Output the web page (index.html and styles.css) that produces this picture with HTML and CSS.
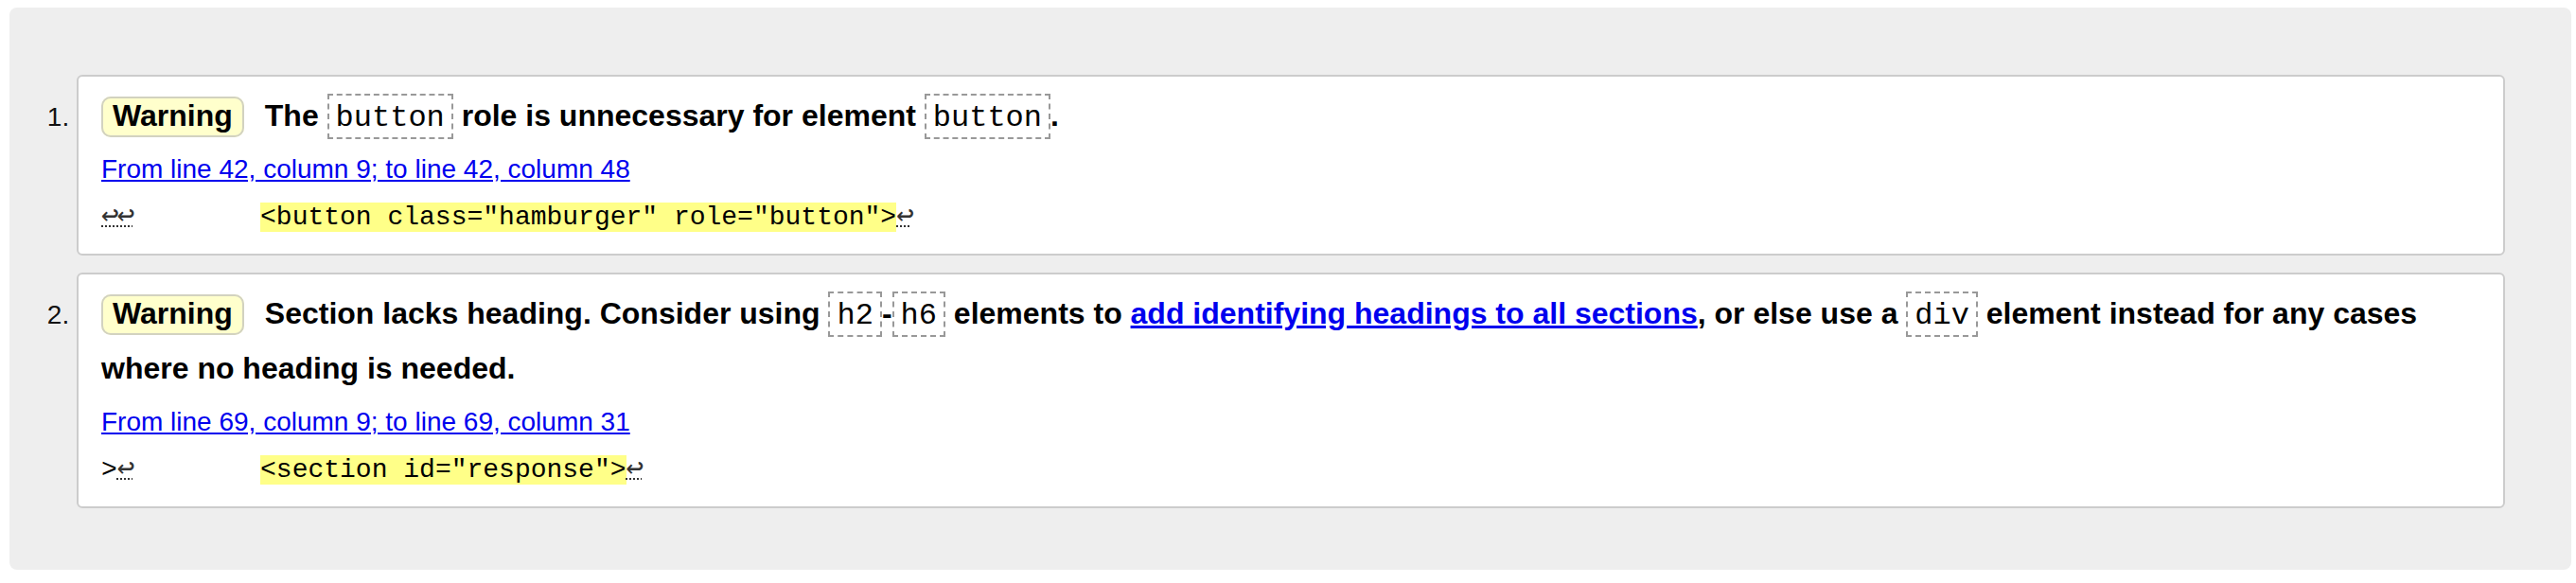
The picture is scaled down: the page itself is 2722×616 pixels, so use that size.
FILE: index.html
```html
<!DOCTYPE html>
<html lang="en">
<head>
<meta charset="utf-8">
<title>Nu Html Checker results</title>
<link rel="stylesheet" href="styles.css">
</head>
<body>
<div class="results">
  <ol class="messages">
    <li class="message">
      <p class="summary"><strong class="badge">Warning</strong><span class="text">The <code>button</code> role is unnecessary for element <code>button</code>.</span></p>
      <p class="location"><a href="#l42c9">From line 42, column 9; to line 42, column 48</a></p>
      <p class="extract"><code><abbr class="lf" title="Line break">↩↩</abbr>        <mark>&lt;button class="hamburger" role="button"&gt;</mark><abbr class="lf" title="Line break">↩</abbr></code></p>
    </li>
    <li class="message">
      <p class="summary"><strong class="badge">Warning</strong><span class="text">Section lacks heading. Consider using <code>h2</code>-<code>h6</code> elements to <a href="#headings">add identifying headings to all sections</a>, or else use a <code>div</code> element instead for any cases where no heading is needed.</span></p>
      <p class="location"><a href="#l69c9">From line 69, column 9; to line 69, column 31</a></p>
      <p class="extract"><code>&gt;<abbr class="lf" title="Line break">↩</abbr>        <mark>&lt;section id="response"&gt;</mark><abbr class="lf" title="Line break">↩</abbr></code></p>
    </li>
  </ol>
</div>
</body>
</html>
```

FILE: styles.css
```css
html, body {
  margin: 0;
  padding: 0;
  background: #fff;
}

body {
  padding: 8px 5px 14px 10px;
  font-family: "Liberation Sans", Arial, Helvetica, sans-serif;
  font-size: 28px;
  color: #000;
}

.results {
  background: #eee;
  border-radius: 8px;
  padding: 71px 70px 65px 71px;
}

.messages {
  margin: 0;
  padding: 0;
  list-style: decimal outside;
}

.message {
  background: #fff;
  border: 2px solid #ccc;
  border-radius: 6px;
  padding: 12px 24px 22px 24px;
}

.message + .message {
  margin-top: 18px;
}

.message::marker {
  font-size: 28px;
  color: #111;
}

.summary {
  margin: 0;
  font-size: 32px;
  font-weight: bold;
  line-height: 58px;
}

.badge {
  background: #ffc;
  border: 2px solid #d2d2c0;
  border-radius: 10px;
  padding: 0 10px 3px;
  margin-right: 22px;
}

.summary code {
  font-family: "Liberation Mono", "Courier New", monospace;
  font-size: 32px;
  font-weight: normal;
  line-height: 1;
  border: 2px dashed #999;
  padding: 5px 7px 2px;
}

.summary a {
  color: #0000ee;
}

.location {
  margin: 12px 0 0;
  line-height: 32px;
}

.location a {
  color: #0000ee;
}

.extract {
  margin: 19px 0 0;
  font-family: "Liberation Mono", "Courier New", monospace;
  font-size: 28px;
  line-height: 32px;
  white-space: pre;
}

.extract code {
  font-family: "Liberation Mono", "Courier New", monospace;
  font-size: 28px;
  line-height: 1;
}

.extract mark {
  background: #ff8;
  color: #000;
  line-height: 1;
}

.extract .lf {
  font-family: "DejaVu Sans Mono", monospace;
  font-size: 31px;
  letter-spacing: -1.86px;
  line-height: 0;
  color: #333;
  text-decoration: underline dotted;
  text-decoration-thickness: 2px;
}
```
